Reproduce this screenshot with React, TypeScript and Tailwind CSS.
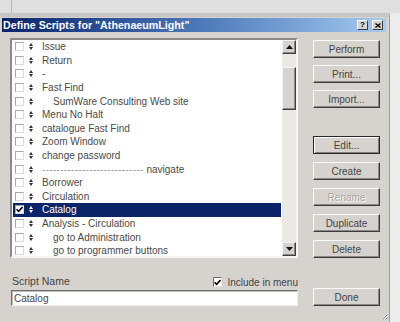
import React from "react";

type Row = { text: string; indent?: boolean; selected?: boolean; dashed?: boolean };

const rows: Row[] = [
  { text: "Issue" },
  { text: "Return" },
  { text: "-" },
  { text: "Fast Find" },
  { text: "SumWare Consulting Web site", indent: true },
  { text: "Menu No Halt" },
  { text: "catalogue Fast Find" },
  { text: "Zoom Window" },
  { text: "change password" },
  { text: "navigate", dashed: true },
  { text: "Borrower" },
  { text: "Circulation" },
  { text: "Catalog", selected: true },
  { text: "Analysis - Circulation" },
  { text: "go to Administration", indent: true },
  { text: "go to programmer buttons", indent: true },
];

function Check({ on, dark }: { on?: boolean; dark?: boolean }) {
  return (
    <div
      className={`${dark ? "w-[10px] h-[10px]" : "w-[9px] h-[9px]"} bg-white border flex items-center justify-center ${
        dark
          ? "border-t-[#707070] border-l-[#707070] border-b-[#e8e8e8] border-r-[#e8e8e8]"
          : "border-t-[#a8a8a8] border-l-[#a8a8a8] border-b-[#dcdcdc] border-r-[#dcdcdc]"
      }`}
    >
      {on && (
        <svg width="7" height="7" viewBox="0 0 7 7">
          <path d="M0.5 3.2 L2.6 5.4 L6.5 1" stroke="#000" strokeWidth="1.6" fill="none" />
        </svg>
      )}
    </div>
  );
}

function SortGlyph({ light }: { light?: boolean }) {
  const c = light ? "#fff" : "#333";
  return (
    <svg width="4" height="7" viewBox="0 0 4 7">
      <polygon points="2,0 4,3 0,3" fill={c} />
      <polygon points="0,4 4,4 2,7" fill={c} />
    </svg>
  );
}

function Btn({ label, className = "", disabled, isDefault }: { label: string; className?: string; disabled?: boolean; isDefault?: boolean }) {
  return (
    <div
      className={`h-[18px] w-[67px] flex items-center justify-center text-[10px] bg-[#d6d3ce] border ${
        isDefault
          ? "border-[#262626] shadow-[inset_1px_1px_0_#fff,inset_-1px_-1px_0_#808080]"
          : "border-t-[#fbfbfb] border-l-[#fbfbfb] border-b-[#3c3c3c] border-r-[#3c3c3c] shadow-[inset_-1px_-1px_0_#8a8a8a]"
      } ${disabled ? "text-[#a8a6a2] [text-shadow:1px_1px_0_#fff]" : "text-[#444]"} ${className}`}
    >
      {label}
    </div>
  );
}

function ScrollBtn({ up }: { up?: boolean }) {
  return (
    <div className="h-[14px] w-[14px] bg-[#d6d3ce] border border-t-[#f4f4f4] border-l-[#f4f4f4] border-b-[#404040] border-r-[#404040] shadow-[inset_-1px_-1px_0_#8a8a8a] flex items-center justify-center">
      <svg width="7" height="4" viewBox="0 0 7 4">
        {up ? <polygon points="3.5,0 7,4 0,4" fill="#111" /> : <polygon points="0,0 7,0 3.5,4" fill="#111" />}
      </svg>
    </div>
  );
}

export default function App() {
  return (
    <div className="w-[400px] h-[322px] bg-[#ececec] flex flex-col overflow-hidden font-['Liberation_Sans',Arial,sans-serif]">
      <div className="h-[13px] flex bg-[#dfdfdf]">
        <div className="w-[12px] border-r border-[#b9b9b9]" />
      </div>
      <div className="relative w-[390px] flex-1 bg-[#d6d3ce] border-t-[4px] border-t-[#c6c6c4] border-r border-r-[#9c9c9c] pl-[2px] pr-[3px] pt-[1px] flex flex-col">
        <div className="h-[14px] flex items-center bg-gradient-to-r from-[#0a246a] via-[#4a76b8] to-[#a6caf0] pl-[1px] pr-[3px]">
          <span className="text-white font-bold text-[10.7px] leading-none whitespace-nowrap">
            Define Scripts for &quot;AthenaeumLight&quot;
          </span>
          <div className="ml-auto flex gap-[4px]">
            <div className="w-[11px] h-[10px] bg-[#d6d3ce] border border-t-white border-l-white border-b-[#404040] border-r-[#404040] flex items-center justify-center text-[8px] font-bold leading-none text-black">
              ?
            </div>
            <div className="w-[11px] h-[10px] bg-[#d6d3ce] border border-t-white border-l-white border-b-[#404040] border-r-[#404040] flex items-center justify-center">
              <svg width="6" height="5" viewBox="0 0 6 5">
                <path d="M0.5 0.5 L5.5 4.5 M5.5 0.5 L0.5 4.5" stroke="#000" strokeWidth="1.3" />
              </svg>
            </div>
          </div>
        </div>

        <div className="flex mt-[6px]">
          <div className="ml-[8px] w-[288px] flex flex-col">
            <div className="h-[220px] flex border-2 border-t-[#8a8a8a] border-l-[#8a8a8a] border-b-[#f4f4f4] border-r-[#f4f4f4] bg-white">
              <div className="flex-1 flex flex-col text-[10px]">
                {rows.map((r, i) => (
                  <div
                    key={i}
                    className={`h-[13.6px] mx-[1px] flex items-center whitespace-nowrap ${
                      r.selected ? "bg-[#0c2468] text-white" : "text-[#4a4a4a]"
                    }`}
                  >
                    <div className="ml-[2px]">
                      <Check on={r.selected} />
                    </div>
                    <div className="ml-[5px] flex items-center">
                      <SortGlyph light={r.selected} />
                    </div>
                    <span className={r.indent ? "ml-[20px]" : "ml-[9px]"}>
                      {r.dashed ? (
                        <>
                          <span className="text-[#9a9a9a] tracking-[0.3px]">
                            {"-".repeat(28)}
                          </span>{" "}
                          {r.text}
                        </>
                      ) : (
                        r.text
                      )}
                    </span>
                  </div>
                ))}
              </div>
              <div className="w-[14px] flex flex-col bg-[#ebe9e4]">
                <ScrollBtn up />
                <div className="h-[13px]" />
                <div className="h-[43px] bg-[#d6d3ce] border border-t-[#f4f4f4] border-l-[#f4f4f4] border-b-[#404040] border-r-[#404040] shadow-[inset_-1px_-1px_0_#8a8a8a]" />
                <div className="flex-1" />
                <ScrollBtn />
              </div>
            </div>

            <div className="mt-[18px] h-[12px] flex items-center text-[10.5px] text-[#444] whitespace-nowrap">
              <span className="w-[207px] pl-[2px]">Script Name</span>
              <Check on dark />
              <span className="ml-[5px] text-[10px]">Include in menu</span>
            </div>
            <div className="mt-[2px] ml-[1px] h-[16px] w-[287px] bg-white border border-t-[#6e6e6e] border-l-[#6e6e6e] border-b-[#f0f0f0] border-r-[#f0f0f0] shadow-[inset_1px_1px_0_#bdbdbd] flex items-center pl-[2px] text-[10px] text-[#444]">
              Catalog
            </div>
          </div>

          <div className="ml-[15px] flex flex-col">
            <Btn label="Perform" className="mt-[2px]" />
            <Btn label="Print..." className="mt-[7px]" />
            <Btn label="Import..." className="mt-[7px]" />
            <Btn label="Edit..." className="mt-[28px]" isDefault />
            <Btn label="Create" className="mt-[8px]" />
            <Btn label="Rename" className="mt-[8px]" disabled />
            <Btn label="Duplicate" className="mt-[8px]" />
            <Btn label="Delete" className="mt-[8px]" />
            <Btn label="Done" className="mt-[30px]" />
          </div>
        </div>

        <svg className="absolute right-[1px] bottom-[2px]" width="8" height="8" viewBox="0 0 8 8">
          <path d="M7.5 1.5 L1.5 7.5 M7.5 4.5 L4.5 7.5" stroke="#fff" strokeWidth="1" />
          <path d="M7.5 2.5 L2.5 7.5 M7.5 5.5 L5.5 7.5" stroke="#808080" strokeWidth="1" />
        </svg>
      </div>
    </div>
  );
}
